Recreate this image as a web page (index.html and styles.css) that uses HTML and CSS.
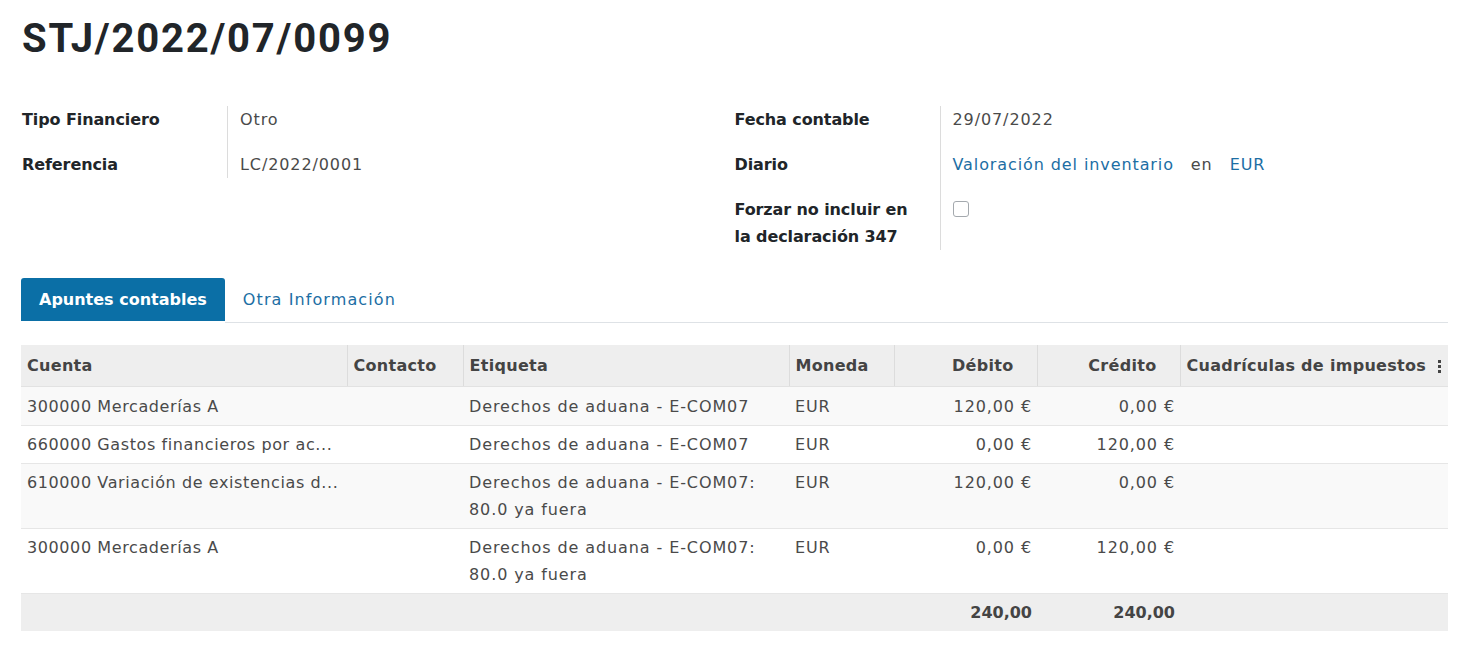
FILE: index.html
```html
<!DOCTYPE html>
<html lang="es">
<head>
<meta charset="utf-8">
<title>STJ/2022/07/0099</title>
<link rel="stylesheet" href="styles.css">
</head>
<body>
<div class="sheet">
  <h1 class="title">STJ/2022/07/0099</h1>

  <div class="groups">
    <div class="group">
      <div class="field">
        <div class="label">Tipo Financiero</div>
        <div class="value">Otro</div>
      </div>
      <div class="field">
        <div class="label">Referencia</div>
        <div class="value">LC/2022/0001</div>
      </div>
    </div>
    <div class="group">
      <div class="field">
        <div class="label">Fecha contable</div>
        <div class="value">29/07/2022</div>
      </div>
      <div class="field">
        <div class="label">Diario</div>
        <div class="value"><a class="link">Valoración del inventario</a><span class="sep">en</span><a class="link">EUR</a></div>
      </div>
      <div class="field">
        <div class="label">Forzar no incluir en la declaración 347</div>
        <div class="value"><span class="checkbox"></span></div>
      </div>
    </div>
  </div>

  <div class="tabs">
    <div class="tab active">Apuntes contables</div>
    <div class="tab">Otra Información</div>
    <div class="tab-rest"></div>
  </div>

  <table class="lines">
    <colgroup>
      <col class="c-cuenta"><col class="c-contacto"><col class="c-etiqueta"><col class="c-moneda"><col class="c-debito"><col class="c-credito"><col class="c-tax">
    </colgroup>
    <thead>
      <tr>
        <th>Cuenta</th>
        <th>Contacto</th>
        <th>Etiqueta</th>
        <th>Moneda</th>
        <th class="num">Débito</th>
        <th class="num">Crédito</th>
        <th class="last"><span>Cuadrículas de impuestos</span><span class="kebab"><i></i><i></i><i></i></span></th>
      </tr>
    </thead>
    <tbody>
      <tr>
        <td class="ell">300000 Mercaderías A</td>
        <td></td>
        <td>Derechos de aduana - E-COM07</td>
        <td>EUR</td>
        <td class="num">120,00 €</td>
        <td class="num">0,00 €</td>
        <td></td>
      </tr>
      <tr>
        <td class="ell">660000 Gastos financieros por ac...</td>
        <td></td>
        <td>Derechos de aduana - E-COM07</td>
        <td>EUR</td>
        <td class="num">0,00 €</td>
        <td class="num">120,00 €</td>
        <td></td>
      </tr>
      <tr>
        <td class="ell">610000 Variación de existencias d...</td>
        <td></td>
        <td>Derechos de aduana - E-COM07: 80.0 ya fuera</td>
        <td>EUR</td>
        <td class="num">120,00 €</td>
        <td class="num">0,00 €</td>
        <td></td>
      </tr>
      <tr>
        <td class="ell">300000 Mercaderías A</td>
        <td></td>
        <td>Derechos de aduana - E-COM07: 80.0 ya fuera</td>
        <td>EUR</td>
        <td class="num">0,00 €</td>
        <td class="num">120,00 €</td>
        <td></td>
      </tr>
    </tbody>
    <tfoot>
      <tr>
        <td></td><td></td><td></td><td></td>
        <td class="num">240,00</td>
        <td class="num">240,00</td>
        <td></td>
      </tr>
    </tfoot>
  </table>
</div>
</body>
</html>
```

FILE: styles.css
```css
* { box-sizing: border-box; }
body {
  margin: 0;
  background: #fff;
  font-family: "DejaVu Sans", "Noto Sans", sans-serif;
  font-size: 16px;
  letter-spacing: 0.9px;
  color: #4a4a4a;
}
.sheet {
  padding: 14px 25px 0 21px;
}
.title {
  margin: 0 0 0 1px;
  font-family: Roboto, "Liberation Sans", sans-serif;
  font-weight: 700;
  font-size: 40px;
  line-height: 50px;
  color: #212529;
  letter-spacing: 1.8px;
}
.groups {
  display: grid;
  grid-template-columns: 1fr 1fr;
  margin-top: 42px;
}
.group {
  display: grid;
  grid-template-columns: 205px 1fr;
  align-content: start;
}
.group:first-child { padding-left: 1px; }
.field { display: contents; }
.label {
  font-weight: 700;
  color: #212529;
  line-height: 27px;
  padding: 0 20px 18px 0;
  letter-spacing: -0.1px;
  font-size: 16px;
}
.value {
  border-left: 1px solid #dcdcdc;
  padding: 0 0 18px 12px;
  line-height: 27px;
}
.group .field:last-child .label,
.group .field:last-child .value { padding-bottom: 0; }
.link { color: #1c6ea4; text-decoration: none; }
.sep { margin: 0 17px; color: #4a4a4a; }
.checkbox {
  display: inline-block;
  width: 16px;
  height: 16px;
  border: 1px solid #a4a9ae;
  border-radius: 3px;
  vertical-align: -2px;
  background: #fff;
}
.tabs {
  display: flex;
  margin-top: 28px;
  align-items: flex-end;
}
.tab {
  padding: 0 18px;
  line-height: 43px;
  color: #1c6ea4;
  letter-spacing: 1.1px;
  border-bottom: 1px solid #dee2e6;
  height: 45px;
}
.tab.active {
  background: #0b6fa6;
  color: #fff;
  font-weight: 700;
  letter-spacing: 0;
  border-radius: 3px 3px 0 0;
  border-bottom-color: #0b6fa6;
  height: 43px;
  margin-bottom: 2px;
  padding: 0 18px 0 18px;
}
.tab-rest {
  flex: 1;
  border-bottom: 1px solid #dee2e6;
  height: 45px;
}
.lines {
  width: 100%;
  margin-top: 22px;
  border-collapse: collapse;
  table-layout: fixed;
}
.c-cuenta { width: 326px; }
.c-contacto { width: 116px; }
.c-etiqueta { width: 326px; }
.c-moneda { width: 105px; }
.c-debito { width: 143px; }
.c-credito { width: 143px; }
.lines th {
  background: #eeeeee;
  color: #444;
  font-weight: 700;
  letter-spacing: 0.3px;
  text-align: left;
  height: 41px;
  padding: 0 6px;
  border-left: 1px solid #dcdcdc;
  border-bottom: 1px solid #e2e2e2;
  white-space: nowrap;
}
.lines th:first-child { border-left: none; }
.lines th.num { text-align: right; padding-right: 23px; }
.kebab {
  float: right;
  display: inline-flex;
  flex-direction: column;
  gap: 2px;
  margin-top: 4px;
  margin-right: 1px;
}
.kebab i {
  display: block;
  width: 3px;
  height: 3px;
  background: #444;
}
.lines td {
  padding: 5px 6px 5px 6px;
  line-height: 27px;
  vertical-align: top;
  border-top: 1px solid #e6e6e6;
  color: #4a4a4a;
}
.lines tbody tr:nth-child(odd) td { background: #f9f9f9; }
.lines tbody tr:first-child td { border-top: none; padding-top: 6px; }
.lines td.num { text-align: right; padding-right: 5px; }
.lines td.ell { white-space: nowrap; overflow: hidden; letter-spacing: 0.6px; }
.lines tfoot td {
  background: #eeeeee;
  font-weight: 700;
  letter-spacing: 0;
  color: #444;
  padding: 5px 5px 5px 6px;
}
```
